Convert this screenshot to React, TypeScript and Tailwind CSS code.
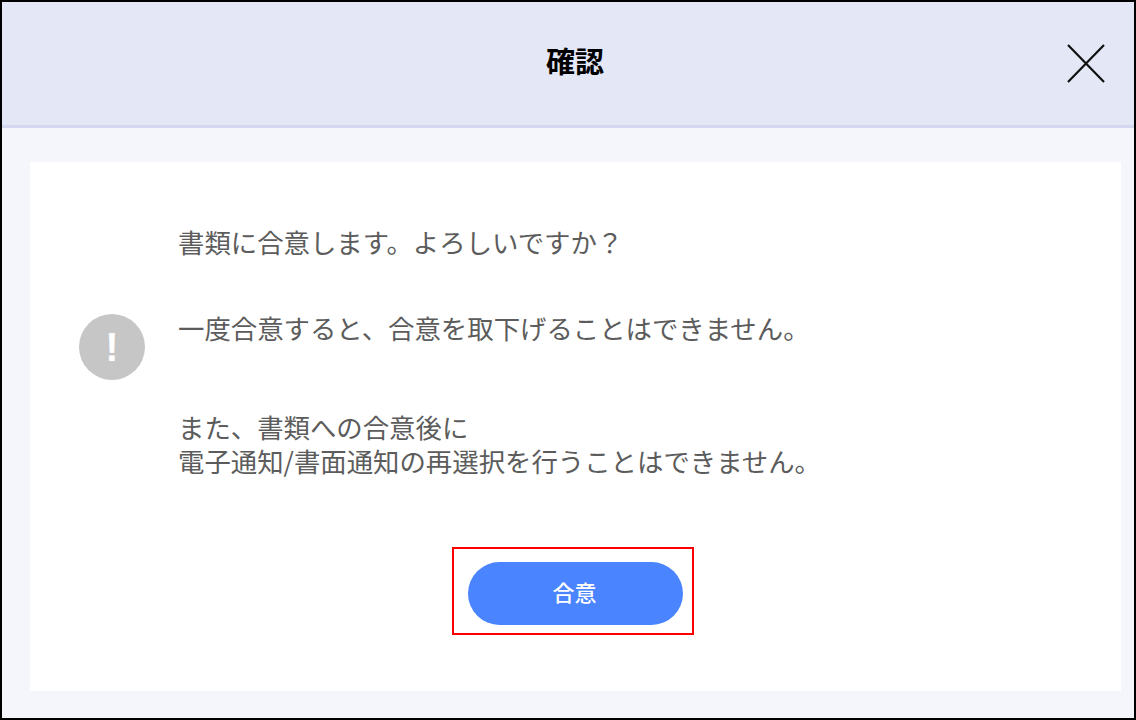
const FONT = "font-['Noto_Sans_CJK_JP','Noto_Sans',sans-serif]"

export default function App() {
  return (
    <div className={`w-[1136px] h-[720px] border-2 border-black bg-[#f5f6fb] flex flex-col ${FONT}`}>
      <div className="h-[126px] shrink-0 bg-[#e4e7f6] border-b-[3px] border-[#d3d7f0] flex items-center justify-between pl-[544px] pr-[28px]">
        <h1 className="text-[29px] font-bold text-black leading-none -mt-[6px]">確認</h1>
        <button className="w-[40px] h-[40px] flex items-center justify-center">
          <svg width="40" height="40" viewBox="0 0 40 40" fill="none" stroke="#111" strokeWidth="2.2">
            <path d="M2 1 L38 38 M38 1 L2 38" />
          </svg>
        </button>
      </div>
      <div className="flex-1 pt-[34px] pl-[28px] pr-[13px] pb-[27px] flex">
        <div className="flex-1 bg-white flex flex-col">
          <div className="flex items-start pl-[49px] pt-[63px]">
            <div className="mt-[89px] w-[66px] h-[66px] rounded-full bg-[#c6c6c6] flex items-center justify-center text-white text-[40px] font-bold leading-none font-['Liberation_Sans',sans-serif]">!</div>
            <div className="ml-[33px] text-[#5c5c5c] text-[26.4px] leading-[34px]">
              <p>書類に合意します。よろしいですか？</p>
              <p className="mt-[52px]">一度合意すると、合意を取下げることはできません。</p>
              <p className="mt-[65px]">また、書類への合意後に</p>
              <p>電子通知/書面通知の再選択を行うことはできません。</p>
            </div>
          </div>
          <div className="mt-[69px] ml-[422px] w-[242px] h-[88px] border-2 border-[#ff0000] pl-[14px] pt-[13px]">
            <button className="w-[215px] h-[63px] rounded-full bg-[#4a84ff] text-white text-[22px] font-medium pb-[4px] pr-[2px]">合意</button>
          </div>
        </div>
      </div>
    </div>
  )
}
